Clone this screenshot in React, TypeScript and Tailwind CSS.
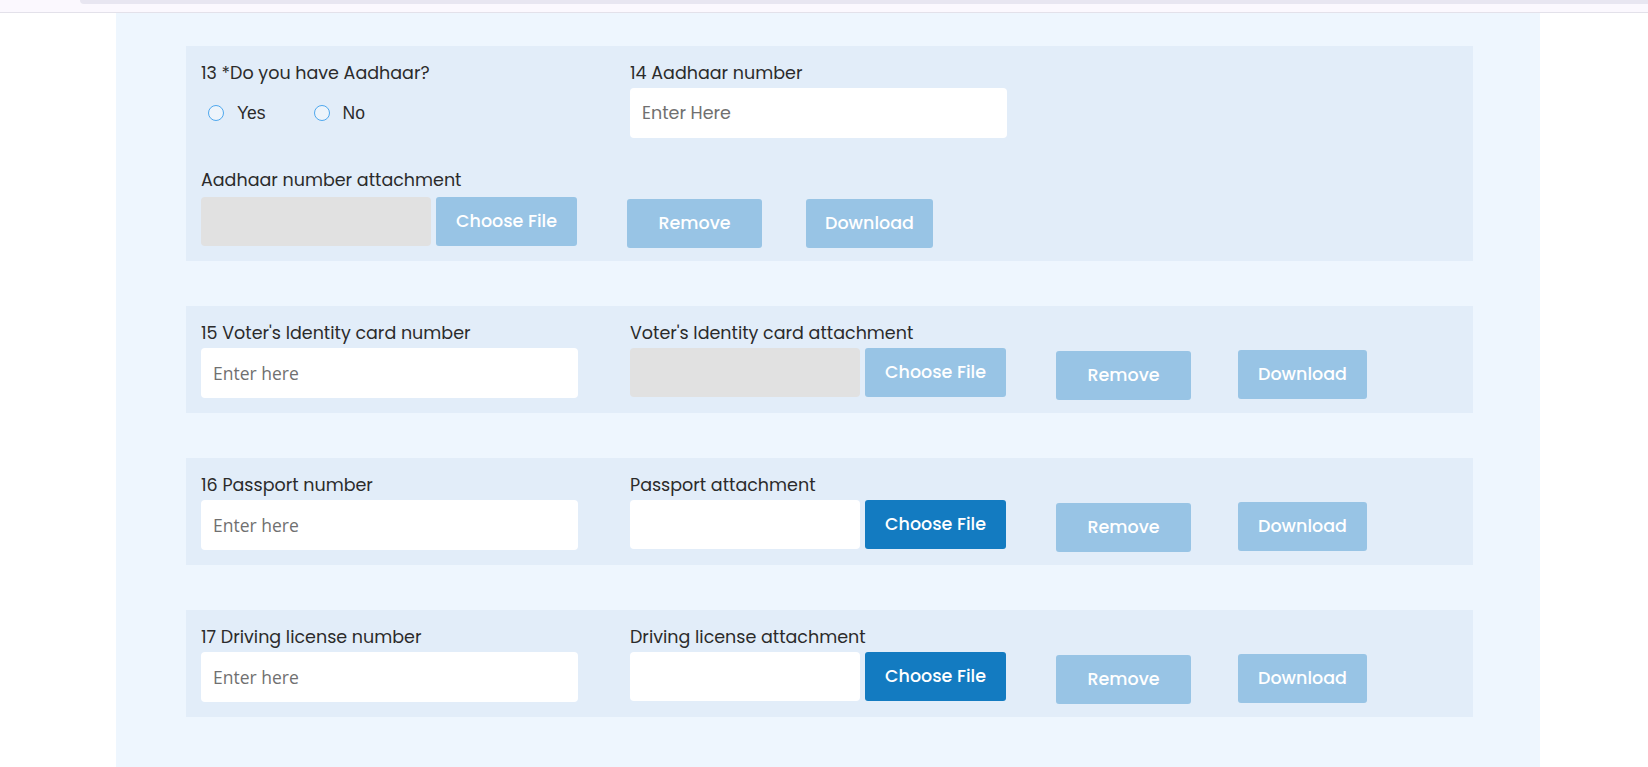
const labelFont = { fontFamily: '"Poppins", "Open Sans", sans-serif' };

function TopChrome() {
	return (
		<div className="h-[13px] bg-[#fbf8fe] border-b border-[#e3e1ea]">
			<div className="h-[4px] ml-[80px] bg-[#e8e6f1] rounded-bl-[10px]" />
		</div>
	);
}

function Label({ children, gap = 'mb-[2px]' }: { children: React.ReactNode; gap?: string }) {
	return <p className={'text-[17.5px] leading-[26px] text-[#2b2b2b] ' + gap}>{children}</p>;
}

function TextInput({ placeholder, poppins }: { placeholder: string; poppins?: boolean }) {
	return (
		<input
			type="text"
			placeholder={placeholder}
			className={
				'w-[377px] h-[50px] rounded-[4px] bg-white px-[12px] text-[17.5px] outline-none placeholder:text-[#707070] ' +
				(poppins ? '' : 'font-["Open_Sans"]')
			}
		/>
	);
}

function AttachmentControls({ enabled, compact }: { enabled?: boolean; compact?: boolean }) {
	return (
		<div className="flex items-start">
			<div
				className={
					'w-[230px] h-[49px] rounded-[4px] ' + (enabled ? 'bg-white' : 'bg-[#e1e1e1]')
				}
			/>
			<button
				className={
					'ml-[5px] w-[141px] h-[49px] rounded-[3px] text-white font-medium text-[17.5px] ' +
					(enabled ? 'bg-[#137bc1]' : 'bg-[#98c4e5]')
				}
			>
				Choose File
			</button>
			<button
				className={
					'ml-[50px] w-[135px] h-[49px] rounded-[3px] bg-[#98c4e5] text-white font-medium text-[17.5px] ' +
					(compact ? 'mt-[2px]' : 'mt-[3px]')
				}
			>
				Remove
			</button>
			<button
				className={
					'mt-[2px] h-[49px] rounded-[3px] bg-[#98c4e5] text-white font-medium text-[17.5px] ' +
					(compact ? 'ml-[44px] w-[127px]' : 'ml-[47px] w-[129px]')
				}
			>
				Download
			</button>
		</div>
	);
}

function Radio({ label }: { label: string }) {
	return (
		<label className="flex items-center">
			<span className="w-[16px] h-[16px] rounded-full border-[1.5px] border-[#4fa8ee] bg-white/40" />
			<span className="ml-[13px] text-[17.5px] leading-[24px] text-[#2b2b2b] font-['Liberation_Sans']">{label}</span>
		</label>
	);
}

type Row = { num: number; name: string; attach: string; enabled: boolean };

const rows: Row[] = [
	{ num: 15, name: "Voter's Identity card number", attach: "Voter's Identity card attachment", enabled: false },
	{ num: 16, name: 'Passport number', attach: 'Passport attachment', enabled: true },
	{ num: 17, name: 'Driving license number', attach: 'Driving license attachment', enabled: true },
];

export default function App() {
	return (
		<div className="min-h-screen bg-white" style={labelFont}>
			<TopChrome />
			<div className="ml-[116px] w-[1424px] h-[754px] bg-[#eef6fe] pt-[33px] px-[70px]">
				{/* Aadhaar */}
				<section className="w-[1287px] bg-[#e2edf9] px-[15px] pt-[14px] pb-[13px]">
					<div className="flex">
						<div className="w-[429px]">
							<Label>13 *Do you have Aadhaar?</Label>
							<div className="flex items-center ml-[7px] mt-[15px] gap-[48px]">
								<Radio label="Yes" />
								<Radio label="No" />
							</div>
						</div>
						<div>
							<Label>14 Aadhaar number</Label>
							<TextInput placeholder="Enter Here" poppins />
						</div>
					</div>
					<div className="mt-[29px]">
						<Label gap="mb-[4px]">Aadhaar number attachment</Label>
						<AttachmentControls compact />
					</div>
				</section>

				{rows.map((r) => (
					<section key={r.num} className="w-[1287px] mt-[45px] bg-[#e2edf9] px-[15px] pt-[14px] pb-[13px] flex">
						<div className="w-[429px]">
							<Label>
								{r.num} {r.name}
							</Label>
							<TextInput placeholder="Enter here" />
						</div>
						<div>
							<Label>{r.attach}</Label>
							<AttachmentControls enabled={r.enabled} />
						</div>
					</section>
				))}
			</div>
		</div>
	);
}
